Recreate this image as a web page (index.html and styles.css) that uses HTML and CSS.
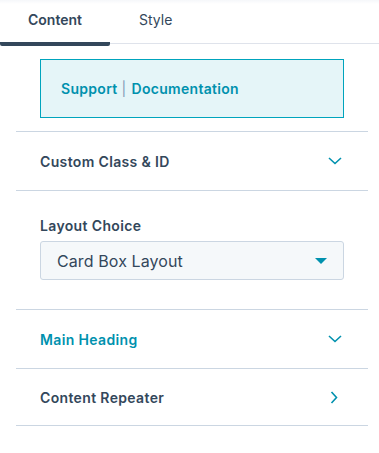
FILE: index.html
```html
<!DOCTYPE html>
<html>
<head>
<meta charset="utf-8" />
<title>Module Editor</title>
<link rel="stylesheet" href="styles.css">
</head>
<body>

<div class="tabs">
  <div class="tab active">Content</div>
  <div class="tab">Style</div>
  <div class="tabRest"></div>
</div>

<div class="panel">
  <div class="notice">
    <a href="#">Support</a><span class="bar">|</span><a href="#">Documentation</a>
  </div>

  <div class="group toggle">
    <span class="title">Custom Class &amp; ID</span>
    <svg class="chev" width="14" height="8" viewBox="0 0 14 8"><path d="M1 1 L7 6.5 L13 1" fill="none" stroke="#0091ae" stroke-width="1.6"/></svg>
  </div>

  <div class="group field">
    <label class="title">Layout Choice</label>
    <div class="select">
      <span>Card Box Layout</span>
      <svg width="12" height="6" viewBox="0 0 12 6"><path d="M0 0 L12 0 L6 6 Z" fill="#0091ae"/></svg>
    </div>
  </div>

  <div class="group toggle">
    <span class="title teal">Main Heading</span>
    <svg class="chev" width="14" height="8" viewBox="0 0 14 8"><path d="M1 1 L7 6.5 L13 1" fill="none" stroke="#0091ae" stroke-width="1.6"/></svg>
  </div>

  <div class="group toggle last">
    <span class="title">Content Repeater</span>
    <svg class="chevRight" width="8" height="13" viewBox="0 0 8 13"><path d="M1.5 1 L6.5 6.5 L1.5 12" fill="none" stroke="#0091ae" stroke-width="1.6"/></svg>
  </div>
</div>

</body>
</html>
```

FILE: styles.css
```css
body {
  margin: 0;
  font-family: "Inter", "Open Sans", sans-serif;
  color: #33475b;
  background: #ffffff;
}

.tabs {
  display: flex;
  align-items: flex-end;
  height: 46px;
  background: linear-gradient(#f5f7fa 0px, #ffffff 4px);
}
.tab {
  width: 110px;
  box-sizing: border-box;
  padding-bottom: 16px;
  text-align: center;
  font-size: 14px;
  border-bottom: 1px solid #dfe3eb;
  margin-bottom: 1px;
}
.tab.active {
  font-weight: 600;
  border-bottom: 4px solid #33475b;
  border-radius: 2px;
  padding-bottom: 14px;
  margin-bottom: 0;
}
.tab:nth-child(2) {
  width: 90px;
  text-align: left;
  padding-left: 29px;
  margin-bottom: 2px;
  padding-bottom: 15px;
}
.tabRest {
  flex: 1;
  border-bottom: 1px solid #dfe3eb;
  margin-bottom: 2px;
}

.panel {
  padding: 13px 11px 0 16px;
}

.notice {
  margin: 0 24px;
  height: 57px;
  background: #e5f5f8;
  border: 1px solid #00a4bd;
  padding-left: 20px;
  display: flex;
  align-items: center;
  font-size: 14px;
  font-weight: 600;
  letter-spacing: 0.3px;
  margin-bottom: 13px;
}
.notice a {
  color: #0091ae;
  text-decoration: none;
}
.notice .bar {
  color: #7c98b6;
  font-weight: 400;
  margin: 0 5px 0 4px;
}

.group {
  border-top: 1px solid #cbd6e2;
  padding: 0 24px;
}
.group.last {
  border-bottom: 1px solid #cbd6e2;
  height: 56px;
}
.toggle {
  height: 58px;
  display: flex;
  align-items: center;
  justify-content: space-between;
}
.title {
  font-size: 14px;
  font-weight: 600;
  letter-spacing: 0.35px;
  color: #33475b;
}
.title.teal {
  color: #0091ae;
}
.chev {
  margin-right: 2px;
}
.chevRight {
  margin-right: 6px;
}

.field {
  padding-top: 26px;
  padding-bottom: 29px;
}
.field .title {
  display: block;
  margin-bottom: 7px;
}
.select {
  height: 39px;
  box-sizing: border-box;
  border: 1px solid #cbd6e2;
  border-radius: 3px;
  background: #f5f8fa;
  display: flex;
  align-items: center;
  justify-content: space-between;
  padding: 0 16px 0 16px;
  font-size: 16px;
  letter-spacing: 0.1px;
}
```
